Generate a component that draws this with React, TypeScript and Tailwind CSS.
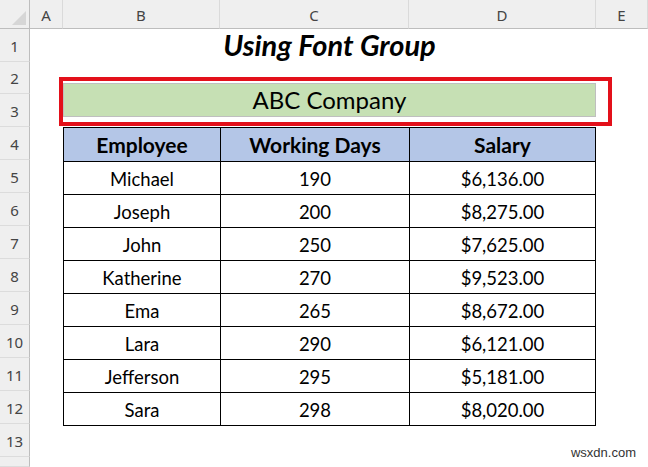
import React from "react";

const rows = [
  ["Michael", "190", "$6,136.00"],
  ["Joseph", "200", "$8,275.00"],
  ["John", "250", "$7,625.00"],
  ["Katherine", "270", "$9,523.00"],
  ["Ema", "265", "$8,672.00"],
  ["Lara", "290", "$6,121.00"],
  ["Jefferson", "295", "$5,181.00"],
  ["Sara", "298", "$8,020.00"],
];

const cols = ["A", "B", "C", "D", "E"];
const rowNums = [1, 2, 3, 4, 5, 6, 7, 8, 9, 10, 11, 12, 13, 14];

const headFont = "font-['Segoe_UI','Noto_Sans',sans-serif] text-[15px] text-[#444]";
const cellFont = "font-['Lato','Liberation_Sans',sans-serif]";

export default function App() {
  return (
    <div className="relative h-[467px] w-[648px] overflow-hidden bg-white">
      <div className="grid h-full grid-cols-[30px_33px_157px_189px_187px_1fr] grid-rows-[29px_33px_32px_33px_repeat(9,33px)_33px_1fr]">
        {/* corner */}
        <div className="relative col-start-1 row-start-1 border-b border-r border-[#bdbdbd] bg-[#efefef]">
          <div className="absolute bottom-[3px] right-[3px] h-0 w-0 border-l-[14px] border-t-[14px] border-l-transparent border-t-transparent [border-right:14px_solid_#d6d6d6]" />
        </div>
        {cols.map((c, i) => (
          <div
            key={c}
            className={`row-start-1 flex items-center justify-center border-b border-r border-b-[#bdbdbd] border-r-[#dadada] bg-[#efefef] pt-[2px] ${headFont} ${
              ["col-start-2", "col-start-3", "col-start-4", "col-start-5", "col-start-6"][i]
            }`}
          >
            {c}
          </div>
        ))}

        {rowNums.map((n) => (
          <div
            key={n}
            style={{ gridRowStart: n + 1 }}
            className={`col-start-1 flex items-end justify-center border-b border-r border-b-[#dcdcdc] border-r-[#bdbdbd] bg-[#efefef] pb-[4px] ${headFont}`}
          >
            {n < 14 ? n : ""}
          </div>
        ))}

        {/* title */}
        <div
          className={`col-span-3 col-start-3 row-start-2 flex items-center justify-center pb-[2px] text-[29px] font-bold italic text-black ${cellFont}`}
        >
          Using Font Group
        </div>

        {/* merged company cell */}
        <div className="col-span-3 col-start-3 row-span-2 row-start-3 pt-[21px]">
          <div
            className={`flex h-[34px] items-center justify-center border border-[#bfbfbf] bg-[#c6e0b4] text-[24px] text-black ${cellFont}`}
          >
            ABC Company
          </div>
        </div>

        {/* data table */}
        <div className="col-span-3 col-start-3 row-span-9 row-start-5">
          <table className={`w-[533px] border-collapse text-black ${cellFont}`}>
            <thead>
              <tr className="h-[33px] bg-[#b4c6e7] text-[21px] font-bold">
                <td className="w-[157px] border border-black pt-[1px] text-center">Employee</td>
                <td className="w-[189px] border border-black pt-[1px] text-center">Working Days</td>
                <td className="border border-black pt-[1px] text-center">Salary</td>
              </tr>
            </thead>
            <tbody>
              {rows.map((r) => (
                <tr key={r[0]} className="h-[33px] text-[18.5px]">
                  {r.map((v, i) => (
                    <td key={i} className="border border-black pt-[3px] text-center leading-[28px]">
                      {v}
                    </td>
                  ))}
                </tr>
              ))}
            </tbody>
          </table>
        </div>
      </div>

      {/* red highlight */}
      <div className="pointer-events-none absolute left-[59px] top-[77px] h-[49px] w-[553px] border-4 border-[#e3101a]" />

      <div className="absolute bottom-[5px] right-[12px] font-['Liberation_Sans',sans-serif] text-[13px] text-[#333]">
        wsxdn.com
      </div>
    </div>
  );
}
